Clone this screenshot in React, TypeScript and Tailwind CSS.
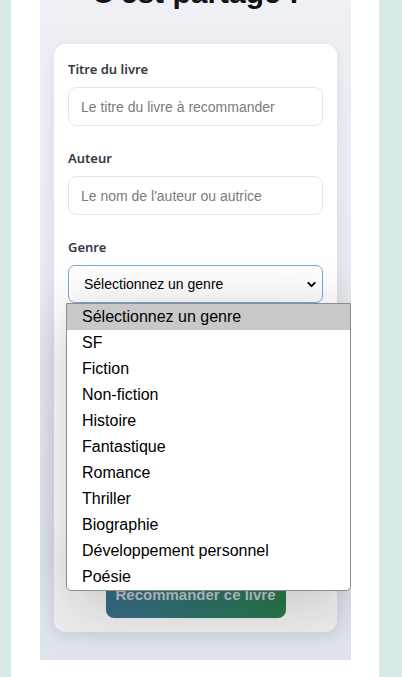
import React from 'react';
import { ChevronDown } from 'lucide-react';

const genres = [
  'Sélectionnez un genre',
  'SF',
  'Fiction',
  'Non-fiction',
  'Histoire',
  'Fantastique',
  'Romance',
  'Thriller',
  'Biographie',
  'Développement personnel',
  'Poésie',
];

function Field({ label, children }: { label: string; children: React.ReactNode }) {
  return (
    <div className="mb-[25px]">
      <label className="block text-[13px] leading-[14px] font-semibold text-[#333a44] mb-[11px] font-['Noto_Sans',sans-serif]">
        {label}
      </label>
      {children}
    </div>
  );
}

export default function App() {
  return (
    <div className="min-h-[677px] bg-[#d7e8e9] font-['Liberation_Sans',Arial,sans-serif]">
      <div className="ml-[11px] w-[368px] min-h-[677px] bg-white pb-[18px]">
        <div className="mx-[29px] w-[311px] bg-gradient-to-b from-[#eef0f6] to-[#dfe3ec] px-[14px] pb-[28px] overflow-hidden">
          {/* Title, scrolled mostly out of view */}
          <h1 className="h-[36px] -mt-[25px] mb-[33px] whitespace-nowrap text-center text-[30px] leading-[36px] font-bold text-[#111]">
            C'est partagé !
          </h1>

          <div className="relative bg-white rounded-[12px] shadow-[0_4px_14px_rgba(0,0,0,0.08)] px-[14px] pt-[18px] pb-[14px]">
            <Field label="Titre du livre">
              <input
                className="w-full h-[39px] rounded-[8px] border border-[#e3e8ef] px-[12px] text-[14px] text-[#333] placeholder:text-[#7b7b7b] outline-none"
                placeholder="Le titre du livre à recommander"
              />
            </Field>

            <Field label="Auteur">
              <input
                className="w-full h-[39px] rounded-[8px] border border-[#e3e8ef] px-[12px] text-[14px] text-[#333] placeholder:text-[#7b7b7b] outline-none"
                placeholder="Le nom de l'auteur ou autrice"
              />
            </Field>

            <Field label="Genre">
              <div className="relative">
                <div className="flex items-center justify-between h-[38px] rounded-[7px] border border-[#7ea6d3] pl-[15px] pr-[4px] text-[14px] text-black">
                  <span>Sélectionnez un genre</span>
                  <ChevronDown className="h-[13px] w-[13px]" strokeWidth={3.5} />
                </div>

                {/* open native dropdown */}
                <div className="absolute left-[-2px] top-[38px] z-20 w-[285px] rounded-b-[5px] border border-[#8c8c8c] bg-white shadow-[0_10px_60px_rgba(0,0,0,0.22)] overflow-hidden">
                  {genres.map((g, i) => (
                    <div
                      key={g}
                      className={
                        i === 0
                          ? 'h-[26px] leading-[25px] pl-[15px] text-[16px] text-black bg-[#c8c8c8]'
                          : 'h-[26px] leading-[25px] pl-[15px] text-[16px] text-black'
                      }
                    >
                      {g}
                    </div>
                  ))}
                </div>
              </div>
            </Field>

            {/* fields hidden behind the open dropdown */}
            <div className="h-[214px] mb-[25px]" />

            <div className="flex justify-center pt-[5px]">
              <button className="w-[180px] h-[46px] rounded-[8px] bg-gradient-to-r from-[#3b7290] to-[#2b7f4e] text-[15px] font-bold text-[#c9d4d8]">
                Recommander ce livre
              </button>
            </div>

            {/* dim layer cast by the open popup */}
            <div className="pointer-events-none absolute inset-x-0 bottom-0 h-[120px] rounded-b-[12px] bg-gradient-to-b from-transparent to-[rgba(0,0,0,0.07)]" />
          </div>
        </div>
      </div>
    </div>
  );
}
